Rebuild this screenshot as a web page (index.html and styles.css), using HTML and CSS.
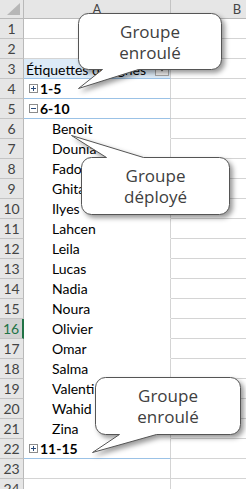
FILE: index.html
```html
<!DOCTYPE html>
<html lang="fr">
<head>
<meta charset="utf-8">
<link rel="stylesheet" href="styles.css">
</head>
<body>
<div class="sheet">
  <div class="hdr corner"><svg class="tri" width="24" height="19" viewBox="0 0 24 19"><polygon points="7,15 20,15 20,3" fill="#b7b7b7"/></svg></div>
  <div class="hdr colh">A</div>
  <div class="hdr colh">B</div>

  <div class="rh">1</div><div class="c"></div><div class="c"></div>
  <div class="rh">2</div><div class="c"></div><div class="c"></div>
  <div class="rh">3</div><div class="c a pv-head"><span>Étiquettes de lignes</span><span class="dd"><svg width="8" height="5" viewBox="0 0 8 5"><polygon points="0.5,0.5 7.5,0.5 4,4.5" fill="#555"/></svg></span></div><div class="c"></div>
  <div class="rh">4</div><div class="c a grp"><svg class="box" width="9" height="9" viewBox="0 0 9 9"><rect x="0.5" y="0.5" width="8" height="8" fill="#fff" stroke="#8c8c8c"/><path d="M2 4.5H7M4.5 2V7" stroke="#2b4b7a" stroke-width="1"/></svg><span>1-5</span></div><div class="c"></div>
  <div class="rh">5</div><div class="c a grp"><svg class="box" width="9" height="9" viewBox="0 0 9 9"><rect x="0.5" y="0.5" width="8" height="8" fill="#fff" stroke="#8c8c8c"/><path d="M2 4.5H7" stroke="#2b4b7a" stroke-width="1"/></svg><span>6-10</span></div><div class="c"></div>
  <div class="rh">6</div><div class="c a item">Benoit</div><div class="c"></div>
  <div class="rh">7</div><div class="c a item">Dounia</div><div class="c"></div>
  <div class="rh">8</div><div class="c a item">Fadoua</div><div class="c"></div>
  <div class="rh">9</div><div class="c a item">Ghita</div><div class="c"></div>
  <div class="rh">10</div><div class="c a item">Ilyes</div><div class="c"></div>
  <div class="rh">11</div><div class="c a item">Lahcen</div><div class="c"></div>
  <div class="rh">12</div><div class="c a item">Leila</div><div class="c"></div>
  <div class="rh">13</div><div class="c a item">Lucas</div><div class="c"></div>
  <div class="rh">14</div><div class="c a item">Nadia</div><div class="c"></div>
  <div class="rh">15</div><div class="c a item">Noura</div><div class="c"></div>
  <div class="rh sel">16</div><div class="c a item">Olivier</div><div class="c"></div>
  <div class="rh">17</div><div class="c a item">Omar</div><div class="c"></div>
  <div class="rh">18</div><div class="c a item">Salma</div><div class="c"></div>
  <div class="rh">19</div><div class="c a item">Valentin</div><div class="c"></div>
  <div class="rh">20</div><div class="c a item">Wahid</div><div class="c"></div>
  <div class="rh">21</div><div class="c a item">Zina</div><div class="c"></div>
  <div class="rh">22</div><div class="c a grp"><svg class="box" width="9" height="9" viewBox="0 0 9 9"><rect x="0.5" y="0.5" width="8" height="8" fill="#fff" stroke="#8c8c8c"/><path d="M2 4.5H7M4.5 2V7" stroke="#2b4b7a" stroke-width="1"/></svg><span>11-15</span></div><div class="c"></div>
  <div class="rh">23</div><div class="c"></div><div class="c"></div>
  <div class="rh">24</div><div class="c"></div><div class="c"></div>
</div>

<div class="callout co1">
  <svg class="shape" width="144" height="57" viewBox="0 0 144 57"><path d="M10.5 0.5H133.5A10 10 0 0 1 143.5 10.5V46.5A10 10 0 0 1 133.5 56.5H60.5L0.5 75.5L24.5 56.5H10.5A10 10 0 0 1 0.5 46.5V10.5A10 10 0 0 1 10.5 0.5Z" fill="#fff" stroke="#555" stroke-width="1"/></svg>
  <span class="txt">Groupe<br>enroulé</span>
</div>

<div class="callout co2">
  <svg class="shape" width="149" height="58" viewBox="0 0 149 58"><path d="M10.5 0.5H25.5L-9.5 -21.5L62.5 0.5H138.5A10 10 0 0 1 148.5 10.5V47.5A10 10 0 0 1 138.5 57.5H10.5A10 10 0 0 1 0.5 47.5V10.5A10 10 0 0 1 10.5 0.5Z" fill="#fff" stroke="#555" stroke-width="1"/></svg>
  <span class="txt">Groupe<br>déployé</span>
</div>

<div class="callout co3">
  <svg class="shape" width="146" height="58" viewBox="0 0 146 58"><path d="M10.5 0.5H135.5A10 10 0 0 1 145.5 10.5V47.5A10 10 0 0 1 135.5 57.5H61.5L-2.5 75.5L24.5 57.5H10.5A10 10 0 0 1 0.5 47.5V10.5A10 10 0 0 1 10.5 0.5Z" fill="#fff" stroke="#555" stroke-width="1"/></svg>
  <span class="txt">Groupe<br>enroulé</span>
</div>
</body>
</html>
```

FILE: styles.css
```css
html, body {
  margin: 0;
  padding: 0;
  background: #fff;
  overflow: hidden;
}
body {
  width: 246px;
  height: 489px;
  position: relative;
  font-family: Lato, "Liberation Sans", sans-serif;
  font-size: 14px;
  color: #000;
}
.sheet {
  display: grid;
  grid-template-columns: 24px 147px 133px;
  grid-template-rows: 19px;
  grid-auto-rows: 20px;
}
.sheet > div {
  box-sizing: border-box;
  border-right: 1px solid #d4d4d4;
  border-bottom: 1px solid #d4d4d4;
}
.hdr {
  background: #e6e6e6;
  border-right-color: #c4c4c4 !important;
  border-bottom-color: #b9b9b9 !important;
  color: #444;
  display: flex;
  align-items: center;
  justify-content: center;
  font-size: 13px;
}
.corner {
  position: relative;
  border-right-color: #b9b9b9 !important;
}
.tri {
  position: absolute;
  left: 0;
  top: 0;
}
.rh {
  background: #e6e6e6;
  border-right-color: #b9b9b9 !important;
  border-bottom-color: #c4c4c4 !important;
  color: #444;
  display: flex;
  align-items: flex-end;
  justify-content: center;
  padding-bottom: 1px;
  font-size: 14px;
}
.rh.sel {
  background: #d2d2d2;
  color: #217346;
  border-right: 2px solid #217346 !important;
}
.c {
  display: flex;
  align-items: flex-end;
  padding-bottom: 1px;
  white-space: nowrap;
  overflow: hidden;
}
.a {
  padding-left: 2px;
}
.pv-head {
  background: #ddebf7;
  border-bottom-color: #9bc2e6 !important;
  align-items: center;
  padding-bottom: 0;
  padding-top: 1px;
}
.dd {
  margin-left: auto;
  margin-right: 1px;
  width: 14px;
  height: 14px;
  box-sizing: border-box;
  border: 1px solid #a6a6a6;
  background: #f2f2f2;
  display: flex;
  align-items: center;
  justify-content: center;
  flex: none;
}
.grp {
  font-weight: bold;
  border-bottom-color: #9bc2e6 !important;
  padding-left: 5px;
}
.box {
  flex: none;
  margin: 0 2px 4px 0;
}
.item {
  padding-left: 28px;
  border-bottom-color: #fff !important;
}
.callout {
  position: absolute;
  display: flex;
  align-items: center;
  justify-content: center;
  text-align: center;
}
.shape {
  position: absolute;
  left: 0;
  top: 0;
  overflow: visible;
  filter: drop-shadow(3px 3px 2.5px rgba(0, 0, 0, 0.4));
}
.txt {
  position: relative;
  font-family: "Open Sans", "Noto Sans", sans-serif;
  font-size: 17px;
  line-height: 21px;
  color: #404040;
}
.co1 {
  left: 78px;
  top: 13px;
  width: 144px;
  height: 57px;
}
.co2 {
  left: 81px;
  top: 157px;
  width: 149px;
  height: 58px;
}
.co3 {
  left: 95px;
  top: 377px;
  width: 146px;
  height: 58px;
}
```
